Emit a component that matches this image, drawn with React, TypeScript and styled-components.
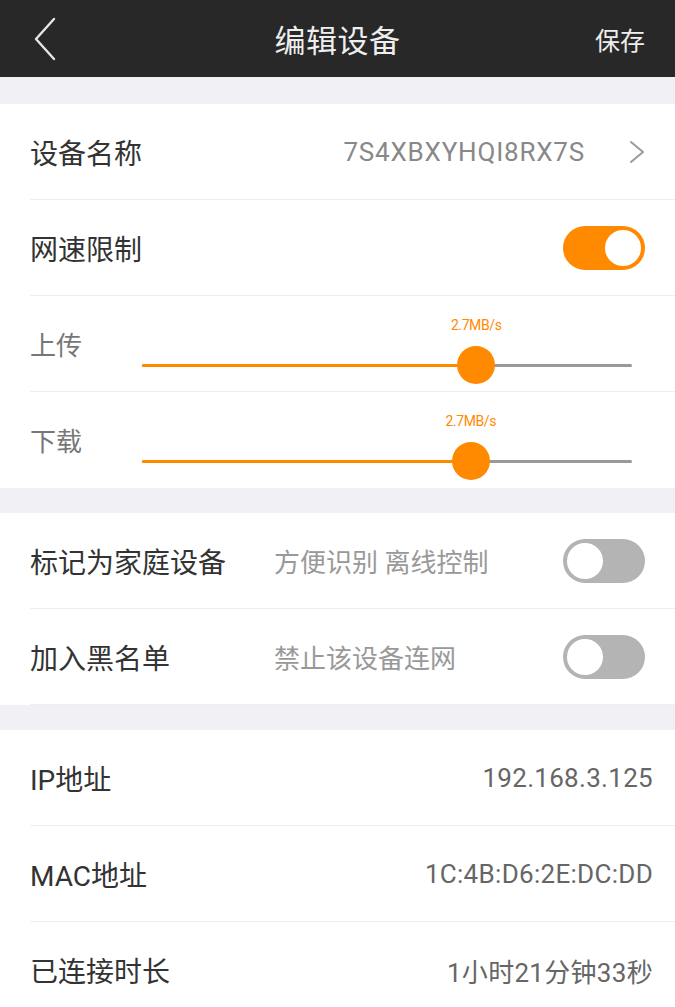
import React from "react";
import styled, { createGlobalStyle } from "styled-components";

const Global = createGlobalStyle`
  html, body { margin: 0; padding: 0; background: #f0f0f5; }
  body { font-family: Roboto, "Noto Sans CJK SC", sans-serif; }
  * { box-sizing: border-box; }
`;

const Page = styled.div`
  width: 675px;
  min-height: 1007px;
  background: #f0f0f5;
  overflow: hidden;
`;

const Header = styled.header`
  height: 77px;
  background: #282828;
  display: grid;
  grid-template-columns: 120px 1fr 120px;
  align-items: center;
  color: #eeeeee;
`;

const BackBtn = styled.div`
  display: flex;
  align-items: center;
  padding-left: 34px;
`;

const Title = styled.div`
  text-align: center;
  font-size: 31px;
  letter-spacing: 0.5px;
`;

const Save = styled.div`
  text-align: right;
  padding-right: 30px;
  font-size: 25px;
`;

const Section = styled.section<{ $gap: number }>`
  background: #ffffff;
  margin-top: ${(p) => p.$gap}px;
`;

const Row = styled.div<{ $last?: boolean }>`
  height: 96px;
  margin-left: 30px;
  display: flex;
  align-items: center;
  border-bottom: ${(p) => (p.$last ? "none" : "1px solid #eeeeee")};
`;

const Label = styled.div<{ $width?: number }>`
  font-size: 28px;
  color: #333333;
  width: ${(p) => (p.$width ? `${p.$width}px` : "auto")};
  flex-shrink: 0;
`;

const Value = styled.div<{ $padRight: number }>`
  margin-left: auto;
  font-size: 26px;
  color: #666666;
  padding-right: ${(p) => p.$padRight}px;
  letter-spacing: 0.3px;
`;

const NameValue = styled.div`
  margin-left: auto;
  font-size: 26px;
  color: #888888;
  display: flex;
  align-items: center;
  gap: 44px;
  padding-right: 30px;
  letter-spacing: 0.8px;
`;

const SubText = styled.div`
  flex: 1;
  font-size: 26px;
  color: #999999;
`;

const ToggleTrack = styled.div<{ $on: boolean }>`
  width: 82px;
  height: 44px;
  border-radius: 22px;
  margin-left: auto;
  margin-right: 30px;
  background: ${(p) => (p.$on ? "#ff8a00" : "#b4b4b4")};
  display: flex;
  align-items: center;
  justify-content: ${(p) => (p.$on ? "flex-end" : "flex-start")};
  padding: 0 4px;
  flex-shrink: 0;
`;

const ToggleKnob = styled.div`
  width: 36px;
  height: 36px;
  border-radius: 50%;
  background: #ffffff;
`;

const SliderRow = styled.div<{ $last?: boolean }>`
  height: 96px;
  margin-left: 30px;
  display: flex;
  border-bottom: ${(p) => (p.$last ? "none" : "1px solid #eeeeee")};
`;

const SliderLabel = styled.div`
  width: 112px;
  flex-shrink: 0;
  font-size: 26px;
  color: #777777;
  padding-top: 29px;
`;

const SliderBox = styled.div`
  flex: 1;
  margin-right: 43px;
  position: relative;
`;

const Track = styled.div`
  position: absolute;
  left: 0;
  right: 0;
  top: 68px;
  height: 3px;
  border-radius: 2px;
  background: #999999;
`;

const Fill = styled.div`
  position: absolute;
  left: 0;
  top: 0;
  bottom: 0;
  background: #ff8a00;
  border-radius: 2px;
`;

const Thumb = styled.div`
  position: absolute;
  top: 50%;
  width: 38px;
  height: 38px;
  margin-left: -19px;
  margin-top: -20px;
  border-radius: 50%;
  background: #ff8a00;
`;

const Bubble = styled.div`
  position: absolute;
  top: 21px;
  transform: translateX(-50%);
  font-size: 14px;
  color: #ff8a00;
  white-space: nowrap;
  letter-spacing: -0.4px;
`;

function Toggle({ on }: { on: boolean }) {
  return (
    <ToggleTrack $on={on}>
      <ToggleKnob />
    </ToggleTrack>
  );
}

function Slider({ label, fraction, text, last }: { label: string; fraction: number; text: string; last?: boolean }) {
  const pct = `${fraction * 100}%`;
  return (
    <SliderRow $last={last}>
      <SliderLabel>{label}</SliderLabel>
      <SliderBox>
        <Bubble style={{ left: pct }}>{text}</Bubble>
        <Track>
          <Fill style={{ width: pct }} />
          <Thumb style={{ left: pct }} />
        </Track>
      </SliderBox>
    </SliderRow>
  );
}

export default function App() {
  return (
    <Page>
      <Global />
      <Header>
        <BackBtn>
          <svg width="22" height="44" viewBox="0 0 22 44">
            <polyline points="20,2 2,22 20,42" fill="none" stroke="#e6e6e6" strokeWidth="2.4" strokeLinecap="round" strokeLinejoin="round" />
          </svg>
        </BackBtn>
        <Title>编辑设备</Title>
        <Save>保存</Save>
      </Header>

      <Section $gap={27}>
        <Row>
          <Label>设备名称</Label>
          <NameValue>
            7S4XBXYHQI8RX7S
            <svg width="16" height="24" viewBox="0 0 16 24">
              <polyline points="2,2 14,12 2,22" fill="none" stroke="#9a9a9a" strokeWidth="2" strokeLinecap="round" strokeLinejoin="round" />
            </svg>
          </NameValue>
        </Row>
        <Row>
          <Label>网速限制</Label>
          <Toggle on />
        </Row>
        <Slider label="上传" fraction={0.682} text="2.7MB/s" />
        <Slider label="下载" fraction={0.671} text="2.7MB/s" last />
      </Section>

      <Section $gap={25}>
        <Row>
          <Label $width={244}>标记为家庭设备</Label>
          <SubText>方便识别 离线控制</SubText>
          <Toggle on={false} />
        </Row>
        <Row>
          <Label $width={244}>加入黑名单</Label>
          <SubText>禁止该设备连网</SubText>
          <Toggle on={false} />
        </Row>
      </Section>

      <Section $gap={25}>
        <Row>
          <Label>IP地址</Label>
          <Value $padRight={22}>192.168.3.125</Value>
        </Row>
        <Row>
          <Label>MAC地址</Label>
          <Value $padRight={22}>1C:4B:D6:2E:DC:DD</Value>
        </Row>
        <Row $last>
          <Label>已连接时长</Label>
          <Value $padRight={22}>1小时21分钟33秒</Value>
        </Row>
      </Section>
    </Page>
  );
}
